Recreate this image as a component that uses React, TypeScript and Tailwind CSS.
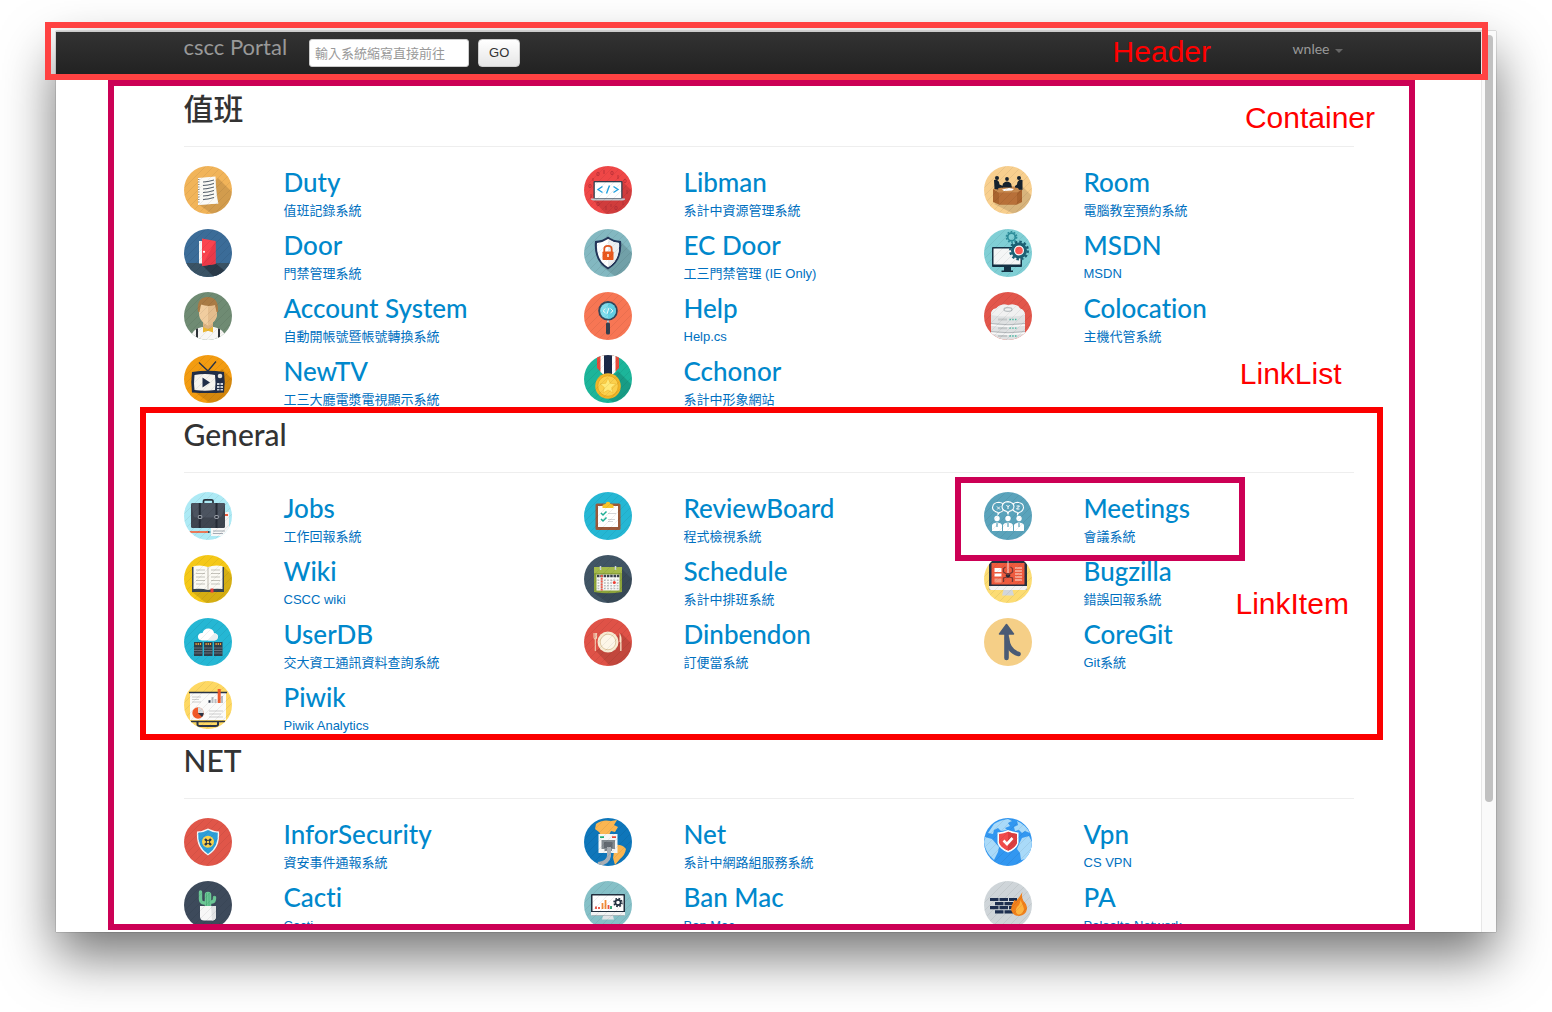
import React from "react";

const TITLE_FONT = "font-['Lato','Noto_Sans_CJK_TC',sans-serif] [font-variant-ligatures:none]";
const BODY_FONT = "font-['Liberation_Sans','Noto_Sans_CJK_TC',sans-serif]";

/* ---------- icons ---------- */

const HATCH =
  "M-2 8L8-2M-2 16L16-2M-2 24L24-2M-2 32L32-2M-2 40L40-2M-2 48L48-2M4 50L50 4M12 50L50 12M20 50L50 20M28 50L50 28M36 50L50 36";

function Disc({ bg, shade, children }: { bg: string; shade?: string; children: React.ReactNode }) {
  return (
    <svg viewBox="0 0 48 48" className="size-12 shrink-0 rounded-full" aria-hidden="true">
      <rect width="48" height="48" fill={bg} />
      {shade && <path d={shade} fill="#000" opacity=".13" />}
      {children}
      <path d={HATCH} stroke="#000" strokeWidth=".8" opacity=".07" />
    </svg>
  );
}

const icons: Record<string, React.ReactNode> = {
  duty: (
    <Disc bg="#f2b45a" shade="M34 12L48 26V48H28L14 38Z">
      <path d="M14 12.500L31 11L34 37.500L14 39Z" fill="#d9d6cf" />
      <path d="M14 12L31.500 10.500Q31.500 30 34.500 37.500L14 39Z" fill="#fbfaf6" />
      <path d="M19 16l5-.5 6-1.500M19 19.500l5-.5 6-1.500M19 23l5-.5 6-1.500M19 26.500l5-.5 6-1.500M19 30l5-.5 6-1.500M19 33.500l5-.5 6-1.500" stroke="#3f4c58" strokeWidth=".9" fill="none" />
      <path d="M14.800 13v25" stroke="#7b746a" strokeWidth="1.200" strokeDasharray="1 1.500" />
    </Disc>
  ),
  door: (
    <Disc bg="#3c6c98">
      <path d="M0 34H48V48H0Z" fill="#3b5366" />
      <path d="M18 36L31 34L46 46L30 48Z" fill="#2a3b4a" />
      <rect x="15" y="12" width="4" height="22.500" fill="#f4f4f4" />
      <path d="M18 9.500L31.500 12V35L18 37Z" fill="#fb4450" />
      <path d="M18 37L31.500 12V35Z" fill="#ea3a49" />
      <circle cx="20" cy="22.800" r="1.100" fill="#fff" />
    </Disc>
  ),
  account: (
    <Disc bg="#6f8b74">
      <path d="M6 48Q7 37 18 35H30Q41 37 43 48Z" fill="#f7f6f4" />
      <path d="M12 37l2-.8V48h-2zM34 36.200l2 .8V48h-2z" fill="#2f3338" />
      <path d="M19 28H29V36L24 39L19 36Z" fill="#dcb383" />
      <path d="M15 13Q15 9 24 9Q33 9 33 14V23Q32 30 24 33.500Q16 30 15 23Z" fill="#f1cda0" />
      <path d="M24 9Q33 9 33 14V23Q32 30 24 33.500Z" fill="#e5bd8d" />
      <path d="M14 20Q12 6 23 5Q35 4.500 34 20L32.500 20L31 13Q24 15 17 12.500L15.500 20Z" fill="#a97b45" />
      <path d="M19 35L24 37L29 35V40.500L24 38.800L19 40.500Z" fill="#e9b634" />
    </Disc>
  ),
  tv: (
    <Disc bg="#f39c12" shade="M38 14L48 24V48H26L12 38Z">
      <path d="M15 7.500L24 16L32 6.500" stroke="#26324a" strokeWidth="1.300" fill="none" />
      <path d="M8 17Q24 14.500 40 17Q41.500 27 40 37.500Q24 38.500 8 37.500Q6.500 27 8 17Z" fill="#232f49" />
      <path d="M10.500 20Q21 18 31 20Q32 28 31 35Q21 36.500 10.500 35Q9.500 28 10.500 20Z" fill="#f7f4ef" />
      <path d="M18.500 22.500V32.500L26 27.500Z" fill="#232f49" />
      <circle cx="36" cy="21" r="2.300" fill="#e4e2dd" />
      <path d="M33 28h2.500v2H33zM36.500 28H39v2h-2.500zM33 31h2.500v2H33zM36.500 31H39v2h-2.500zM33 34h2.500v1.500H33zM36.500 34H39v1.500h-2.500z" fill="#cfd3da" />
    </Disc>
  ),
  libman: (
    <Disc bg="#ef4848" shade="M38 15L48 25V48H22L8 33Z">
      <g fill="none" stroke="#a42a33" strokeWidth=".8" opacity=".8">
        <ellipse cx="14" cy="8" rx="1.200" ry="1.800" />
        <ellipse cx="28" cy="7" rx="1.200" ry="1.800" />
        <ellipse cx="6" cy="20" rx="1.200" ry="1.800" />
        <ellipse cx="41" cy="15" rx="1.200" ry="1.800" />
        <ellipse cx="14" cy="38" rx="1.200" ry="1.800" />
        <ellipse cx="32" cy="42" rx="1.200" ry="1.800" />
        <path d="M20 4v4M34 9v4M9 12v3M22 40v4M39 35v4M7 28v4M43 24v4M27 38v3" />
      </g>
      <rect x="9.500" y="15" width="29" height="18" rx="1" fill="#2f3f4f" />
      <rect x="10.800" y="16.300" width="26.400" height="15.700" fill="#fff" />
      <path d="M18.500 20.500L14 23.500L18.500 26.500M29.500 20.500L34 23.500L29.500 26.500M25.500 19.500L22.500 27.500" stroke="#24a3e0" strokeWidth="1.400" fill="none" />
      <path d="M7 32.500H41V33.500Q40 34.500 38 34.500H10Q8 34.500 7 33.500Z" fill="#c3c8cd" />
    </Disc>
  ),
  ecdoor: (
    <Disc bg="#84b9c1" shade="M36 12L48 24V48H32L16 36Z">
      <path d="M24 7.500Q29 11.500 37 12Q39 32 24 40.500Q9 32 11 12Q19 11.500 24 7.500Z" fill="#24365a" />
      <path d="M24 10Q29 13.500 35 14Q36.300 31 24 38.200Q11.700 31 13 14Q19 13.500 24 10Z" fill="#fff" />
      <path d="M24 10Q29 13.500 35 14Q36.300 31 24 38.200Z" fill="#eceff2" />
      <path d="M20.300 23V20Q20.300 16.800 24 16.800Q27.700 16.800 27.700 20V23" stroke="#e1571f" strokeWidth="1.800" fill="none" />
      <rect x="18.500" y="22.500" width="11" height="8.500" rx=".8" fill="#ea5a1f" />
      <path d="M23.300 25h1.400v3h-1.400z" fill="#fff" />
    </Disc>
  ),
  help: (
    <Disc bg="#f77754">
      <path d="M23 28h2v5h-2z" fill="#c9ccd0" />
      <rect x="22" y="30.500" width="4" height="12" rx="1.500" fill="#34404e" />
      <circle cx="24" cy="18.800" r="9.800" fill="#34495e" />
      <circle cx="24" cy="18.800" r="7.900" fill="#7fdcec" />
      <path d="M24 10.900a7.900 7.900 0 0 1 0 15.800z" fill="#63cfe3" />
      <path d="M21.500 16.500L19 18.800L21.500 21M26.500 16.500L29 18.800L26.500 21M25 15.800L23 21.800" stroke="#fff" strokeWidth=".9" fill="none" />
    </Disc>
  ),
  honor: (
    <Disc bg="#1db59a" shade="M34 16L48 30V48H30L14 36Z">
      <path d="M13 0H35V13L28 20H20L13 13Z" fill="#e64c3c" />
      <path d="M16.500 0H31.500V17L28 20H20L16.500 17Z" fill="#fff" />
      <path d="M20 0H28V19H20Z" fill="#1c2b49" />
      <circle cx="24" cy="31" r="12.800" fill="#f0b62b" />
      <circle cx="24" cy="31" r="10.300" fill="#fbd04d" stroke="#e3a41f" strokeWidth=".8" />
      <path d="M24 23L26.300 28.300L32 28.800L27.700 32.500L29 38L24 35L19 38L20.300 32.500L16 28.800L21.700 28.300Z" fill="#ffe978" stroke="#eebb30" strokeWidth=".6" />
    </Disc>
  ),
  room: (
    <Disc bg="#f8cf8f" shade="M38 20L48 30V48H30L10 38Z">
      <path d="M9 23L16 20.500H32L38 23L33 26.500H15Z" fill="#c98a4f" />
      <path d="M18 23.500l7-1.500 5 1-2 1.500-8 .5z" fill="#fff" />
      <path d="M9 23L15 26.500H33L38 23V36L33 38.500H15L9 36Z" fill="#a9642f" />
      <path d="M15 26.500H33V38.500H15Z" fill="#b8703a" />
      <g fill="#16232f">
        <circle cx="13" cy="12" r="2" />
        <path d="M10 14Q15 13 15.500 18.500L19 20V21.500L14.500 22L14 23.500L10.500 23Z" />
        <circle cx="23" cy="13" r="1.900" />
        <path d="M19 17.500Q23 13.500 27 17.500L28 21.500H18Z" />
        <circle cx="35" cy="12" r="2" />
        <path d="M38.500 14Q33.500 13 33 18.500L31 20V21.500L34 22L35 23.800H38.500Z" />
      </g>
    </Disc>
  ),
  msdn: (
    <Disc bg="#80cfd6">
      <circle cx="27.500" cy="8" r="3.800" fill="none" stroke="#2f8f9c" strokeWidth="1.800" />
      <circle cx="27.500" cy="8" r="5.200" fill="none" stroke="#2f8f9c" strokeWidth="1.400" strokeDasharray="1.800 1.470" />
      <rect x="8" y="18" width="30" height="20" rx="1" fill="#143244" />
      <rect x="9.500" y="19.500" width="27" height="16" fill="#f4f6f6" />
      <path d="M20 38h7v3.500h2v1.500H17.500v-1.500H20z" fill="#143244" />
      <circle cx="35" cy="21.500" r="8" fill="#1d6175" />
      <circle cx="35" cy="21.500" r="8.800" fill="none" stroke="#1d6175" strokeWidth="2.400" strokeDasharray="2.500 2.110" />
      <circle cx="35" cy="21.500" r="5" fill="#fff" />
      <circle cx="35" cy="21.500" r="3.800" fill="#fb5a56" />
    </Disc>
  ),
  colocation: (
    <Disc bg="#e2574c">
      <path d="M7 23Q7 17 12 16.500Q17 11 24 13Q33 11 36 16.500Q41 18 41 24V48H7Z" fill="#dfe1e2" />
      <path d="M7 23Q7 17 12 16.500Q17 11 24 13Q33 11 36 16.500Q41 18 41 23Q24 26 7 23Z" fill="#f1f2f2" />
      <ellipse cx="24" cy="17.500" rx="4" ry="1.800" fill="none" stroke="#b9bdc0" strokeWidth="1.200" />
      <path d="M7 31.500Q24 34 41 31.500M7 39.500Q24 42 41 39.500" stroke="#b4b8bb" strokeWidth="1" fill="none" />
      <path d="M7 33Q24 35.500 41 33M7 41Q24 43.500 41 41" stroke="#f8f8f8" strokeWidth="1.400" fill="none" />
      <path d="M14 27.500h9M14 36.200h9M14 44h9" stroke="#c3c7c9" strokeWidth="2" />
      <path d="M25.500 27.500H33M25.500 36.200H33M25.500 44H33" stroke="#34b39a" strokeWidth="1.300" strokeDasharray="1.300 1.500" />
    </Disc>
  ),
  jobs: (
    <Disc bg="#aeeaf5">
      <rect x="40" y="20" width="5" height="17" fill="#f4f4f4" />
      <path d="M41 23h3" stroke="#ea5a3b" strokeWidth="2" />
      <rect x="27" y="36" width="18" height="8" fill="#f8f8f8" />
      <path d="M29 39h12M29 41.500h10" stroke="#9aa4ad" strokeWidth=".9" />
      <path d="M4 40h20" stroke="#ea7a5a" strokeWidth="2" />
      <path d="M24 39l3 1-3 1z" fill="#29333d" />
      <path d="M19.500 11V9Q19.500 7.800 21 7.800H27.500Q29 7.800 29 9V11" stroke="#29333d" strokeWidth="1.700" fill="none" />
      <rect x="7" y="11" width="34" height="25" rx="1.500" fill="#3f4550" />
      <path d="M7.500 12Q7.500 11 9 11H39.500Q41 11 41 12.500L38 24Q37.500 25.500 36 25.500H12Q10 25.500 9.500 24Z" fill="#4d5460" />
      <path d="M15.800 11v25M32.500 11v25" stroke="#262c36" strokeWidth="2" />
      <rect x="14.300" y="23.500" width="3.500" height="3" rx=".6" fill="none" stroke="#b4bac0" strokeWidth=".8" />
      <rect x="30.800" y="23.500" width="3.500" height="3" rx=".6" fill="none" stroke="#b4bac0" strokeWidth=".8" />
    </Disc>
  ),
  wiki: (
    <Disc bg="#f5c918" shade="M40 12L48 20V48H22L8 37Z">
      <path d="M8 12H40V37H8Z" fill="#3b4650" />
      <path d="M9.500 11Q18 9.500 24 12Q30 9.500 38.500 11V34Q30 33 24 35Q18 33 9.500 34Z" fill="#fbfaf4" />
      <path d="M24 12V35" stroke="#c9c5ba" strokeWidth="1.200" />
      <path d="M12 15h9M12 18.500h9M12 22h9M12 25.500h9M12 29h9M27 15h9M27 18.500h9M27 22h9M27 25.500h9M27 29h9" stroke="#c5c3bb" strokeWidth="1.200" />
      <path d="M26.500 33.500H29.500V37.500H26.500Z" fill="#e8413c" />
    </Disc>
  ),
  userdb: (
    <Disc bg="#26b7d4">
      <path d="M18 22.500Q13.500 22 14 18Q15 14.500 18.500 15Q20 10 25 10.500Q29.500 11 30 15Q34 15.500 34 19Q33.500 22.500 30 22.500Z" fill="#fff" />
      <path d="M24 22.500L31 15.500Q34 16 34 19Q33.500 22.500 30 22.500Z" fill="#e6eef0" />
      <path d="M10 24h8.500v14H10zM20 24h8.500v14H20zM30 24h8.500v14H30z" fill="#32404a" />
      <path d="M10 30h8.500M10 32.500h8.500M10 35h8.500M20 30h8.500M20 32.500h8.500M20 35h8.500M30 30h8.500M30 32.500h8.500M30 35h8.500" stroke="#75828a" strokeWidth=".8" />
      <path d="M11.500 26h6M21.500 26h6M31.500 26h6" stroke="#f0a33c" strokeWidth="2" strokeDasharray="1.200 1" />
    </Disc>
  ),
  piwik: (
    <Disc bg="#fed863">
      <path d="M13.500 40v3.500Q13.500 45 16 45H31Q34 45 34 43.500V40" stroke="#2a3546" strokeWidth="2" fill="none" />
      <path d="M6 12H42V39H6Z" fill="#fbfbfa" />
      <path d="M5 11.500H43M7 40.500H41" stroke="#2a3546" strokeWidth="1.600" />
      <path d="M8 16h9M8 18.500h7M8 21h9M25 30h14M25 33h12M25 36h14" stroke="#cfd0d0" strokeWidth="1.100" />
      <path d="M28.500 22v-6M31.500 22v-4M38 22v-7" stroke="#b9bdc2" strokeWidth="2" />
      <path d="M24.500 20.500h2" stroke="#2a3546" strokeWidth="2.400" />
      <path d="M35.200 8v14" stroke="#f15a2b" strokeWidth="3" />
      <circle cx="14" cy="32" r="5.700" fill="#f15a2b" />
      <path d="M14 32V26.300A5.700 5.700 0 0 1 19.700 32Z" fill="#dadcdd" />
      <path d="M14 32H19.700A5.700 5.700 0 0 1 18 36Z" fill="#2a3546" />
    </Disc>
  ),
  review: (
    <Disc bg="#26b7d4">
      <rect x="11.500" y="11.500" width="25" height="26.500" rx="1.500" fill="#9a5a3c" />
      <rect x="14" y="14" width="20" height="21" fill="#fff" />
      <path d="M18.500 16V13.500Q19 12 21.500 12Q22 9.800 24 9.800Q26 9.800 26.500 12Q29 12 29.500 13.500V16Z" fill="#f8c329" />
      <path d="M17 21l2 2 3.500-3.500M17 27l2 2 3.500-3.500" stroke="#1fae95" strokeWidth="1.500" fill="none" />
      <path d="M24 21.500h8M24 27.500h7M24 29.500h5" stroke="#d3d6d8" strokeWidth="1.100" />
    </Disc>
  ),
  schedule: (
    <Disc bg="#425666" shade="M38 14L48 24V48H24L10 38Z">
      <path d="M10 12H38V37Q24 39.500 10 37Z" fill="#8ca33b" />
      <path d="M10 12H38V18H10Z" fill="#a5bb4c" />
      <rect x="12.500" y="19.500" width="23" height="16" fill="#fafaf7" />
      <path d="M13 21H35.500" stroke="#3c434b" strokeWidth="2.400" strokeDasharray="2.500 .8" />
      <path d="M13.500 25.200h22M13.500 28h22M13.500 30.800h22M13.500 33.600h22" stroke="#b9bcbd" strokeWidth="1.500" strokeDasharray="1.800 1.400" />
      <path d="M17.700 20v15.500" stroke="#f05a48" strokeWidth="2" strokeDasharray="2 .8" />
      <circle cx="30.300" cy="27.500" r="1.500" fill="#ef3f35" />
      <path d="M16.500 15v-4M31.500 15v-4" stroke="#cfd8dc" strokeWidth="1.500" />
    </Disc>
  ),
  dinner: (
    <Disc bg="#df5247" shade="M37 15L48 26V48H26L12 33Z">
      <circle cx="24" cy="24" r="10.500" fill="#f7ead2" />
      <circle cx="24" cy="24" r="7.800" fill="#fdf6e8" stroke="#dfc9a4" strokeWidth="1" />
      <path d="M10 15v4Q10 21.500 11.300 21.500V33M12.600 15v4Q12.600 21.500 11.300 21.500M11.300 15v6" stroke="#f6e6ca" strokeWidth=".9" fill="none" />
      <path d="M35.500 15Q38 18 37.500 24V33H36.200V24H35.500Z" fill="#f6e6ca" />
    </Disc>
  ),
  meetings: (
    <Disc bg="#5ba3bc">
      <g stroke="#fff" strokeWidth="1.100" fill="#5ba3bc">
        <path d="M14 20.500Q8.500 19 8.500 15.500Q9 10.500 15 10.300Q20.500 11 20.500 15.500Q20 19.500 15.500 20.500L14 22.500Z" />
        <path d="M33.500 20.500Q28 19 28 15.500Q28.500 10.500 33.500 10.300Q39.500 11 39.500 15.500Q39 19.500 35 20.500L33.500 22.500Z" />
        <path d="M23 19.500Q18 18.500 18 14.800Q18.500 9.800 24 9.600Q30 10.500 30 14.800Q29.500 18.500 25 19.500L24 22Z" />
      </g>
      <path d="M13 14.500l3 3M16 14.500l-3 3M22.500 13l1.500 2 1.500-2M24 15v2M32.500 14h3l-3 3h3" stroke="#fff" strokeWidth="1" fill="none" />
      <g fill="#fff">
        <circle cx="13" cy="26.500" r="2.700" />
        <circle cx="24" cy="26.500" r="2.700" />
        <circle cx="35" cy="26.500" r="2.700" />
        <path d="M8 39V33.500Q8 31 13 30.500Q18 31 18 33.500V39ZM19 39V33.500Q19 31 24 30.500Q29 31 29 33.500V39ZM30 39V33.500Q30 31 35 30.500Q40 31 40 33.500V39Z" />
      </g>
      <path d="M13 31v4M24 31v4M35 31v4" stroke="#5ba3bc" strokeWidth="1.200" />
    </Disc>
  ),
  bugzilla: (
    <Disc bg="#fcdc74">
      <rect x="5" y="6" width="38" height="29" rx="2" fill="#263143" />
      <rect x="7.500" y="8" width="33" height="21.500" fill="#ef5b3f" />
      <path d="M5 31H43V33Q43 35 41 35H7Q5 35 5 33Z" fill="#f4f4f4" />
      <path d="M19.500 35H28.500L30 40.500H18Z" fill="#d2d7da" />
      <path d="M10.500 13h7v4h-7zM10.500 18.500h7v3h-7z" fill="#fff" />
      <path d="M10.500 23.500h7v4h-7z" fill="#f59a83" />
      <path d="M31 13h7M31 16h7M31 19h7M31 22h7M31 25h7" stroke="#f9b9a6" strokeWidth="1.400" />
      <path d="M24 6v12" stroke="#fff" strokeWidth=".8" />
      <circle cx="24" cy="20.500" r="2.200" fill="#1f2937" />
      <path d="M24 20L19.500 17V13.500L21.500 12M24 20L28.500 17V13.500L26.500 12M23 22L19.500 23V27M25 22L28.500 23V27" stroke="#7a3a35" strokeWidth="1.300" fill="none" />
    </Disc>
  ),
  coregit: (
    <svg viewBox="0 0 48 48" className="size-12 shrink-0 rounded-full" aria-hidden="true">
      <rect width="48" height="48" fill="#f5cf87" />
      <path d="M22.500 14V40" stroke="#4a5b75" strokeWidth="4.600" strokeLinecap="round" />
      <path d="M23 20Q24 33 34.500 36" stroke="#4a5b75" strokeWidth="4.600" strokeLinecap="round" fill="none" />
      <path d="M22.500 6.500L29.500 16H15.500Z" fill="#4a5b75" stroke="#4a5b75" strokeWidth="1.500" strokeLinejoin="round" />
    </svg>
  ),
  infosec: (
    <Disc bg="#e0574a">
      <path d="M24 10.500Q29 13 35 13.500Q36.500 30 24 37.500Q11.500 30 13 13.500Q19 13 24 10.500Z" fill="#f5f5f5" />
      <path d="M24 12Q28.500 14.500 33.800 14.800Q34.800 29 24 36Q13.200 29 14.200 14.800Q19.500 14.500 24 12Z" fill="#2d9fd8" />
      <circle cx="24" cy="23.800" r="6" fill="#fbd24c" />
      <path d="M21 21l6 6M27 21l-6 6" stroke="#27364a" strokeWidth="2.400" />
      <circle cx="24" cy="24" r="1.200" fill="#fbd24c" />
    </Disc>
  ),
  cacti: (
    <Disc bg="#3e4b5c">
      <path d="M24 22H20Q16.500 22 16.500 18V11M24 21H28Q30.500 21 30.500 17V16.500" stroke="#6cc895" strokeWidth="3.400" strokeLinecap="round" fill="none" />
      <path d="M24 14V26" stroke="#6cc895" strokeWidth="6.500" strokeLinecap="round" />
      <path d="M25 12v14M22.500 12v14" stroke="#4aac7a" strokeWidth=".8" />
      <path d="M16 25H32V36Q31.500 39.500 28 39.500H20Q16.500 39.500 16 36Z" fill="#f7f7f7" />
      <path d="M27 25H32V36Q31.500 39.500 28 39.500Z" fill="#e2e4e5" />
    </Disc>
  ),
  net: (
    <Disc bg="#0e77bb">
      <path d="M12 6Q18 1 27 3L33 2L30 7L34 9L31 14L27 13L25 17H17L15 14L11 11Z" fill="#fbb651" />
      <path d="M31 27Q38 26 42 31Q41 37 36 41L31 47L29 40Z" fill="#fbb651" />
      <rect x="14.500" y="16" width="19" height="19" fill="#f5f6f6" />
      <path d="M16 18.300h4v1.800h-4z" fill="#27ae74" />
      <path d="M28 18.300h4v1.800h-4z" fill="#e64c3c" />
      <path d="M17.500 22H31V31H28V33H20.500V31H17.500Z" fill="#848b92" />
      <path d="M20 24H28.500V30H20Z" fill="#626a72" />
      <path d="M25 29V38Q24 45 14 46" stroke="#a9afb4" strokeWidth="4" fill="none" />
    </Disc>
  ),
  banmac: (
    <Disc bg="#86c0c7">
      <path d="M19.500 33H28.500L30 38.500H18Z" fill="#dfe4e6" />
      <rect x="7" y="13" width="34" height="21.500" rx="1" fill="#22303f" />
      <rect x="8.500" y="14.500" width="31" height="15.500" fill="#fff" />
      <path d="M7 31H41V34.500H7Z" fill="#f2f3f4" />
      <path d="M12 28v-2.500M15 28v-2" stroke="#e9503f" strokeWidth="1.800" />
      <path d="M18.500 28v-6M21.500 28v-9" stroke="#f08b35" strokeWidth="1.800" />
      <path d="M24.500 28v-4" stroke="#e9503f" strokeWidth="1.800" />
      <path d="M27 28v-3" stroke="#26a474" strokeWidth="1.800" />
      <circle cx="34" cy="21.500" r="2.600" fill="none" stroke="#22303f" strokeWidth="1.600" />
      <circle cx="34" cy="21.500" r="4" fill="none" stroke="#22303f" strokeWidth="1.500" strokeDasharray="1.700 1.440" />
    </Disc>
  ),
  vpn: (
    <Disc bg="#3397f1">
      <path d="M10 6Q16 2 24 1L28 3L24 5L26 8L21 10L23 12L17 13L14 10L10 12L9 16L4 15ZM33 3Q42 7 46 15L41 13L38 15L35 12L31 13L30 9L34 7Z" fill="#a9daf9" />
      <path d="M1 19L8 21L15 29L14 34L10 42Q1 34 0 24ZM35 26L38 20L45 18L48 24Q48 34 42 41L37 42L36 35L33 31Z" fill="#a9daf9" />
      <path d="M24 12Q29 14 34.500 14.500V25Q33 31 24 34.500Q15 31 13.500 25V14.500Q19 14 24 12Z" fill="#fff" />
      <path d="M24 13.700Q28.500 15.500 33 16V25Q31 30 24 32.800Q17 30 15 25V16Q19.500 15.500 24 13.700Z" fill="#f14d4d" />
      <path d="M24 13.700Q28.500 15.500 33 16V25Q31 30 24 32.800Z" fill="#dc4042" />
      <path d="M19.500 22.500l3.500 3.500 5.500-6" stroke="#fff" strokeWidth="2.600" fill="none" />
    </Disc>
  ),
  firewall: (
    <Disc bg="#cfd6d9">
      <path d="M6 18.500H33M11 22.600H35M6 26.700H33M11 30.800H35" stroke="#1f3151" strokeWidth="3.200" strokeDasharray="8.500 1" />
      <path d="M38.500 11Q35 17 32 20Q30 18 30 20Q26 26 27.500 30Q29.500 35 35 35Q42 34 43 28Q43 23 39.500 20Q37 16 38.500 11Z" fill="#f0801c" />
      <path d="M36.500 19Q36 24 33 26Q30 31 34 33.500Q39 34 40 28Q39 24 36.500 19Z" fill="#fdb341" />
    </Disc>
  ),
};

/* ---------- data ---------- */

type Item = { title: string; sub: string; icon: string; marked?: boolean };
type Group = { name: string; items: Item[]; marked?: boolean };

const groups: Group[] = [
  {
    name: "值班",
    items: [
      { title: "Duty", sub: "值班記錄系統", icon: "duty" },
      { title: "Libman", sub: "系計中資源管理系統", icon: "libman" },
      { title: "Room", sub: "電腦教室預約系統", icon: "room" },
      { title: "Door", sub: "門禁管理系統", icon: "door" },
      { title: "EC Door", sub: "工三門禁管理 (IE Only)", icon: "ecdoor" },
      { title: "MSDN", sub: "MSDN", icon: "msdn" },
      { title: "Account System", sub: "自動開帳號暨帳號轉換系統", icon: "account" },
      { title: "Help", sub: "Help.cs", icon: "help" },
      { title: "Colocation", sub: "主機代管系統", icon: "colocation" },
      { title: "NewTV", sub: "工三大廳電漿電視顯示系統", icon: "tv" },
      { title: "Cchonor", sub: "系計中形象網站", icon: "honor" },
    ],
  },
  {
    name: "General",
    marked: true,
    items: [
      { title: "Jobs", sub: "工作回報系統", icon: "jobs" },
      { title: "ReviewBoard", sub: "程式檢視系統", icon: "review" },
      { title: "Meetings", sub: "會議系統", icon: "meetings", marked: true },
      { title: "Wiki", sub: "CSCC wiki", icon: "wiki" },
      { title: "Schedule", sub: "系計中排班系統", icon: "schedule" },
      { title: "Bugzilla", sub: "錯誤回報系統", icon: "bugzilla" },
      { title: "UserDB", sub: "交大資工通訊資料查詢系統", icon: "userdb" },
      { title: "Dinbendon", sub: "訂便當系統", icon: "dinner" },
      { title: "CoreGit", sub: "Git系統", icon: "coregit" },
      { title: "Piwik", sub: "Piwik Analytics", icon: "piwik" },
    ],
  },
  {
    name: "NET",
    items: [
      { title: "InforSecurity", sub: "資安事件通報系統", icon: "infosec" },
      { title: "Net", sub: "系計中網路組服務系統", icon: "net" },
      { title: "Vpn", sub: "CS VPN", icon: "vpn" },
      { title: "Cacti", sub: "Cacti", icon: "cacti" },
      { title: "Ban Mac", sub: "Ban Mac", icon: "banmac" },
      { title: "PA", sub: "Paloalto Network", icon: "firewall" },
    ],
  },
];

/* ---------- components ---------- */

/* Outline laid over a part of the page, with the part's name beside it. */
function Marker({ box, label, text }: { box: string; label: string; text: string }) {
  return (
    <div className={`pointer-events-none absolute z-10 border-6 ${box}`}>
      <span className={`absolute text-[30px] leading-8 text-[#ff0000] ${label}`}>{text}</span>
    </div>
  );
}

function LinkItem({ item }: { item: Item }) {
  return (
    <li className="relative h-[63px]">
      <a href="#" className="flex gap-[52px]">
        {icons[item.icon]}
        <span className="min-w-0 whitespace-nowrap">
          <span className={`block text-[26px] leading-8 text-[#0088cc] ${TITLE_FONT} font-medium`}>
            {item.title}
          </span>
          <span className="mt-[3px] block text-[13px] leading-5 text-[#0070c0]">{item.sub}</span>
        </span>
      </a>
      {item.marked && (
        <Marker
          box="-top-[15px] -left-[29px] -bottom-[6px] w-[290px] border-[#cc0055]"
          label="top-[105px] left-[275px]"
          text="LinkItem"
        />
      )}
    </li>
  );
}

function LinkList({ group }: { group: Group }) {
  return (
    <section className="relative">
      <h2
        className={`mb-[19px] border-b border-[#eeeeee] pb-[22px] text-[30px] leading-8 text-[#333333] ${TITLE_FONT} font-medium`}
      >
        {group.name}
      </h2>
      <ul className="grid grid-cols-3 gap-x-[30px]">
        {group.items.map((item) => (
          <LinkItem key={item.title} item={item} />
        ))}
      </ul>
      {group.marked && (
        <Marker
          box="-top-[11px] -right-[29px] bottom-1 -left-[44px] border-[#fb0000]"
          label="-top-[55px] right-[35px]"
          text="LinkList"
        />
      )}
    </section>
  );
}

function Header() {
  return (
    <header className="relative z-20 border-t border-[#cccccc] bg-linear-to-b from-[#333333] to-[#222222]">
      <div className="mx-auto flex h-[42px] max-w-[1170px] items-center">
        <a href="#" className={`mr-[22px] pb-3 text-[22px] leading-6 text-[#999999] ${TITLE_FONT}`}>
          cscc Portal
        </a>
        <form className="flex items-center gap-[9px]" onSubmit={(e) => e.preventDefault()}>
          <input
            type="text"
            aria-label="輸入系統縮寫直接前往"
            placeholder="輸入系統縮寫直接前往"
            className="h-7 w-40 rounded-[3px] border border-[#cccccc] bg-white px-[5px] text-[13px] text-[#555555] placeholder:text-[#999999]"
          />
          <button
            type="submit"
            className="h-7 rounded-[4px] border border-[#cccccc] bg-linear-to-b from-white to-[#e6e6e6] px-[10px] text-[13px] text-[#333333]"
          >
            GO
          </button>
        </form>
        <button
          type="button"
          className={`mr-[11px] ml-auto flex items-center gap-[5px] pb-2 text-[14px] leading-5 text-[#999999] ${TITLE_FONT}`}
        >
          wnlee
          <span className="mt-1 border-x-4 border-t-4 border-x-transparent border-t-[#666666]" />
        </button>
      </div>
      <Marker
        box="-top-[10px] -right-[7px] -bottom-[6px] -left-[11px] border-[#ff4242]"
        label="top-2 right-[271px]"
        text="Header"
      />
    </header>
  );
}

export default function App() {
  return (
    <div className={`flex h-screen flex-col overflow-hidden bg-white px-14 pt-[31px] pb-20 ${BODY_FONT}`}>
      <div className="flex min-h-0 flex-1 bg-white shadow-[0_24px_50px_rgba(0,0,0,0.55),0_0_1px_rgba(0,0,0,0.6)]">
        <div className="flex min-w-0 flex-1 flex-col">
          <Header />
          <main className="relative min-h-0 flex-1 overflow-hidden pt-[18px]">
            <div className="mx-auto max-w-[1170px]">
              {groups.map((g) => (
                <LinkList key={g.name} group={g} />
              ))}
            </div>
            <Marker
              box="top-[6px] right-[66px] bottom-[2px] left-[52px] border-[#cc0055]"
              label="top-4 right-[34px]"
              text="Container"
            />
          </main>
        </div>
        <div className="w-[15px] border-l border-[#e7e7e7] bg-[#fafafa] pt-1 pl-[3px]">
          <div className="h-[85.5%] w-2 rounded-full bg-[#c1c1c1]" />
        </div>
      </div>
    </div>
  );
}
